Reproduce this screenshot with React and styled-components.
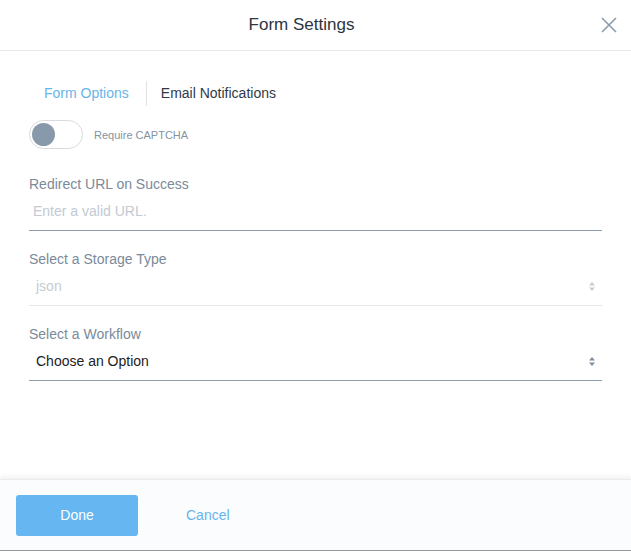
import React, { useState } from 'react'
import styled, { createGlobalStyle } from 'styled-components'

const GlobalStyle = createGlobalStyle`
  html, body {
    margin: 0;
    padding: 0;
    background: #ffffff;
    font-family: "Liberation Sans", Arial, sans-serif;
  }
`

const Modal = styled.div`
  width: 631px;
  height: 552px;
  display: flex;
  flex-direction: column;
  background: #fff;
  box-sizing: border-box;
`

const Header = styled.div`
  height: 51px;
  flex: none;
  display: flex;
  align-items: center;
  justify-content: center;
  position: relative;
  border-bottom: 1px solid #e6e8ea;
  box-sizing: border-box;
  padding-right: 28px;
`

const Title = styled.h1`
  margin: 0;
  font-size: 17px;
  font-weight: normal;
  color: #2c3540;
`

const CloseButton = styled.button`
  position: absolute;
  right: 13px;
  top: 16px;
  width: 18px;
  height: 18px;
  padding: 0;
  border: none;
  background: none;
  cursor: pointer;
  display: flex;
`

const Body = styled.div`
  flex: 1;
  padding: 29px 29px 0 29px;
  display: flex;
  flex-direction: column;
`

const Tabs = styled.div`
  display: flex;
  align-items: center;
  padding-left: 15px;
  height: 26px;
`

const Tab = styled.button`
  border: none;
  background: none;
  padding: 0;
  font-family: inherit;
  font-size: 14px;
  color: ${p => (p.$active ? '#69b4ea' : '#2f3a47')};
  cursor: pointer;
`

const TabDivider = styled.span`
  width: 1px;
  height: 25px;
  background: #dfe2e5;
  margin: 0 14px 0 17px;
`

const ToggleRow = styled.label`
  display: flex;
  align-items: center;
  gap: 11px;
  margin-top: 14px;
  cursor: pointer;
`

const Track = styled.span`
  width: 54px;
  height: 29px;
  box-sizing: border-box;
  border: 1px solid #d8dcdf;
  border-radius: 15px;
  background: #fff;
  display: flex;
  align-items: center;
  padding: 0 2px;
  justify-content: ${p => (p.$on ? 'flex-end' : 'flex-start')};
`

const Knob = styled.span`
  width: 23px;
  height: 23px;
  border-radius: 50%;
  background: #8799aa;
`

const ToggleText = styled.span`
  font-size: 11px;
  color: #8493a2;
`

const Field = styled.div`
  display: flex;
  flex-direction: column;
  margin-top: ${p => p.$top || 20}px;
`

const Label = styled.div`
  font-size: 14px;
  color: #7a8a9a;
  line-height: 16px;
`

const Control = styled.div`
  height: 38px;
  display: flex;
  align-items: center;
  justify-content: space-between;
  border-bottom: 1px solid ${p => (p.$muted ? '#e5e7e9' : '#8b9cad')};
  padding: 0 6px 0 ${p => p.$inset || 7}px;
`

const TextInput = styled.input`
  flex: 1;
  border: none;
  outline: none;
  padding: 0;
  font-family: inherit;
  font-size: 14px;
  color: #222;
  background: transparent;
  &::placeholder {
    color: #c2cad2;
  }
`

const SelectValue = styled.span`
  font-size: 14px;
  color: ${p => (p.$muted ? '#c5ccd3' : '#222')};
`

const Footer = styled.div`
  height: 72px;
  flex: none;
  background: #fbfcfd;
  box-shadow: 0 -3px 4px rgba(0, 0, 0, 0.05);
  border-top: 1px solid #ececec;
  border-bottom: 1px solid #999;
  display: flex;
  align-items: center;
  padding: 0 16px;
  gap: 48px;
  box-sizing: border-box;
  margin-bottom: 1px;
`

const DoneButton = styled.button`
  width: 122px;
  height: 41px;
  border: none;
  border-radius: 3px;
  background: #65b6f1;
  color: #fff;
  font-family: inherit;
  font-size: 14px;
  cursor: pointer;
`

const CancelButton = styled.button`
  border: none;
  background: none;
  padding: 0;
  color: #69b4ea;
  font-family: inherit;
  font-size: 14px;
  cursor: pointer;
`

function Arrows({ color }) {
  return (
    <svg width="8" height="11" viewBox="0 0 8 11">
      <path d="M4 1 L7 4.5 H1 Z" fill={color} />
      <path d="M4 10 L7 6.5 H1 Z" fill={color} />
    </svg>
  )
}

function App() {
  const [captcha, setCaptcha] = useState(false)
  const [tab, setTab] = useState('options')

  return (
    <Modal>
      <GlobalStyle />
      <Header>
        <Title>Form Settings</Title>
        <CloseButton aria-label="Close">
          <svg width="18" height="18" viewBox="0 0 18 18">
            <path d="M2 2 L16 16 M16 2 L2 16" stroke="#8a9cad" strokeWidth="1.6" />
          </svg>
        </CloseButton>
      </Header>

      <Body>
        <Tabs>
          <Tab $active={tab === 'options'} onClick={() => setTab('options')}>Form Options</Tab>
          <TabDivider />
          <Tab $active={tab === 'email'} onClick={() => setTab('email')}>Email Notifications</Tab>
        </Tabs>

        <ToggleRow onClick={() => setCaptcha(!captcha)}>
          <Track $on={captcha}>
            <Knob />
          </Track>
          <ToggleText>Require CAPTCHA</ToggleText>
        </ToggleRow>

        <Field $top={27}>
          <Label>Redirect URL on Success</Label>
          <Control $inset={4}>
            <TextInput placeholder="Enter a valid URL." />
          </Control>
        </Field>

        <Field>
          <Label>Select a Storage Type</Label>
          <Control $muted>
            <SelectValue $muted>json</SelectValue>
            <Arrows color="#c5ccd3" />
          </Control>
        </Field>

        <Field>
          <Label>Select a Workflow</Label>
          <Control>
            <SelectValue>Choose an Option</SelectValue>
            <Arrows color="#7e8e9e" />
          </Control>
        </Field>
      </Body>

      <Footer>
        <DoneButton>Done</DoneButton>
        <CancelButton>Cancel</CancelButton>
      </Footer>
    </Modal>
  )
}

export default App
